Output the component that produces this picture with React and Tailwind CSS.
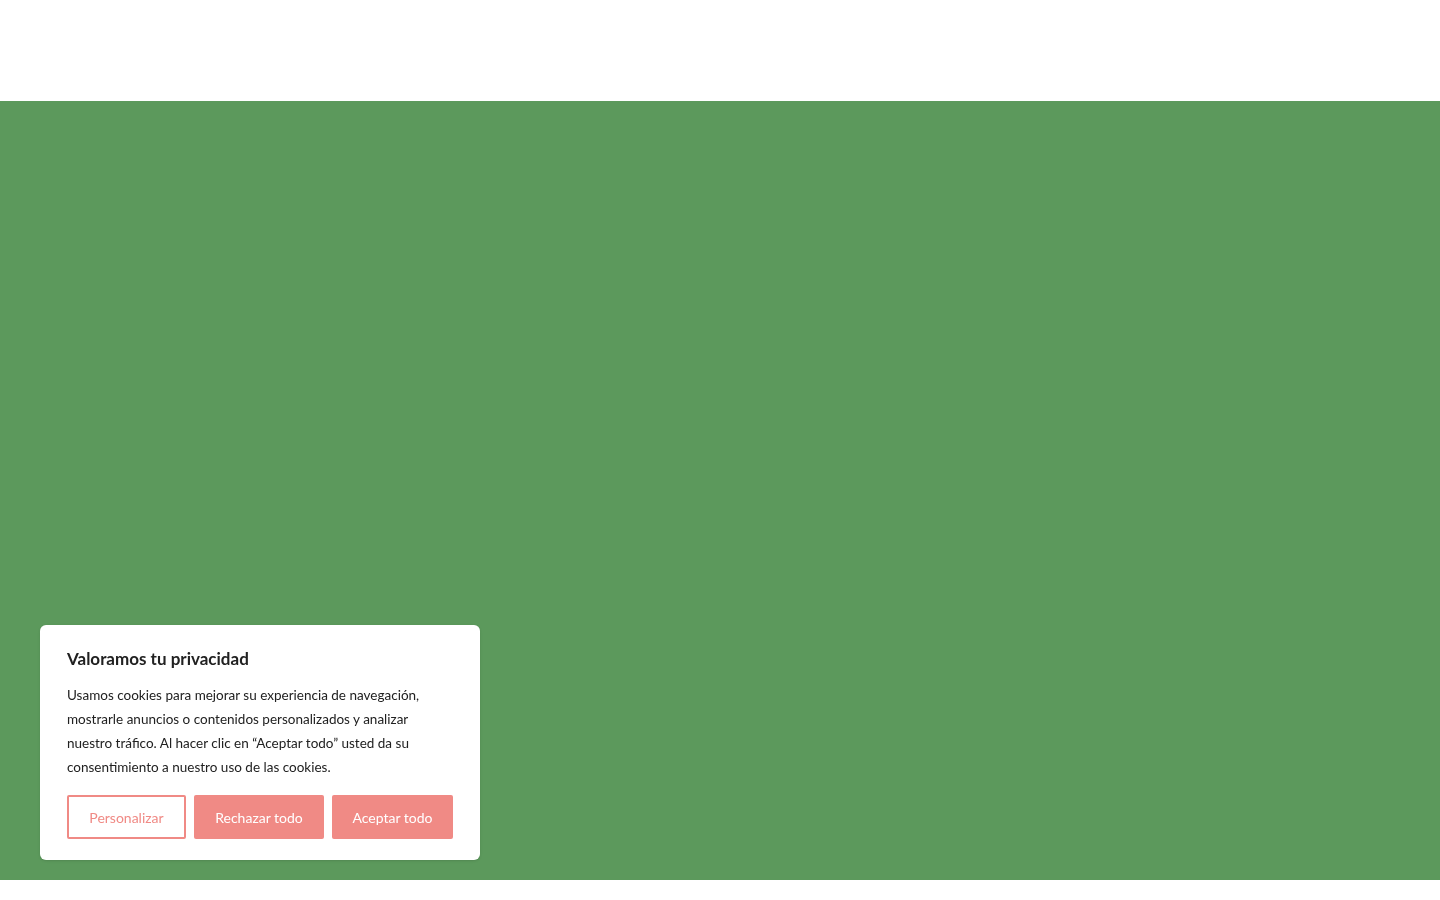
export default function App() {
  return (
    <div className="h-screen overflow-y-scroll bg-white" style={{ fontFamily: 'Lato, "Noto Sans", sans-serif' }}>
      <header className="h-[101px] bg-white" />
      <section className="h-[779px] bg-[#5c995c]" />
      <main className="h-[1920px] bg-white" />

      <div className="fixed left-10 bottom-10 w-[440px] rounded-md bg-white px-[27px] pt-[22px] pb-[21px] shadow-sm">
        <h2 className="text-[17px] font-bold text-[#212121] leading-6">Valoramos tu privacidad</h2>
        <p className="mt-3 text-[13.5px] leading-6 text-[#212121]">
          Usamos cookies para mejorar su experiencia de navegación, mostrarle anuncios o contenidos personalizados y analizar nuestro tráfico. Al hacer clic en “Aceptar todo” usted da su consentimiento a nuestro uso de las cookies.
        </p>
        <div className="mt-4 flex gap-2">
          <button className="h-11 w-[119px] border-2 border-[#f08a85] text-[14px] text-[#f08a85] rounded-[2px]">Personalizar</button>
          <button className="h-11 w-[130px] bg-[#f08a85] text-[14px] text-white rounded-[2px]">Rechazar todo</button>
          <button className="h-11 w-[121px] bg-[#f08a85] text-[14px] text-white rounded-[2px]">Aceptar todo</button>
        </div>
      </div>
    </div>
  )
}
